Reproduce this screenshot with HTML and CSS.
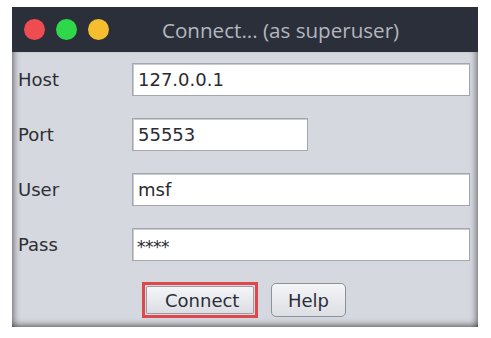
FILE: index.html
```html
<!DOCTYPE html>
<html lang="en">

<head>
    <meta charset="UTF-8">
    <meta name="viewport" content="width=device-width, initial-scale=1.0">
    <title>Connect</title>
    <link rel="stylesheet" href="styles.css">
</head>

<body>

    <div class="window">
        <div class="titlebar">
            <span class="dot dot-red"></span>
            <span class="dot dot-green"></span>
            <span class="dot dot-yellow"></span>
            <span class="title">Connect... (as superuser)</span>
        </div>

        <div class="content">
            <div class="form-row">
                <label>Host</label>
                <div class="field field-wide">127.0.0.1</div>
            </div>
            <div class="form-row">
                <label>Port</label>
                <div class="field field-short">55553</div>
            </div>
            <div class="form-row">
                <label>User</label>
                <div class="field field-wide">msf</div>
            </div>
            <div class="form-row">
                <label>Pass</label>
                <div class="field field-wide field-pass">****</div>
            </div>

            <div class="button-row">
                <div class="highlight">
                    <button class="btn">Connect</button>
                </div>
                <button class="btn btn-help">Help</button>
            </div>
        </div>
    </div>

</body>

</html>
```

FILE: styles.css
```css
body {
    margin: 0;
    padding: 7px 0 0 12px;
    background-color: #fff;
    font-family: "DejaVu Sans", sans-serif;
}

.window {
    width: 466px;
}

.titlebar {
    height: 45px;
    background-color: #2b2f3a;
    display: flex;
    align-items: center;
    padding-left: 12px;
    box-sizing: border-box;
}

.dot {
    width: 21px;
    height: 21px;
    border-radius: 50%;
    margin-right: 11px;
}

.dot-red {
    background-color: #ee4c50;
}

.dot-green {
    background-color: #2fd84a;
}

.dot-yellow {
    background-color: #f6bd2e;
}

.title {
    margin-left: 42px;
    font-family: "Open Sans", sans-serif;
    font-size: 20.6px;
    color: #b3b7bf;
}

.content {
    background-color: #d5d8df;
    padding: 11px 8px 9px 6px;
    box-shadow: inset 7px 0 6px -5px rgba(0, 0, 0, 0.45),
        inset -7px 0 6px -5px rgba(0, 0, 0, 0.45),
        inset 0 -7px 6px -5px rgba(0, 0, 0, 0.5);
}

.form-row {
    display: flex;
    align-items: center;
    margin-bottom: 22px;
}

.form-row label {
    width: 114px;
    font-size: 18px;
    color: #2e2e33;
}

.field {
    height: 33px;
    box-sizing: border-box;
    background-color: #fff;
    border: 1px solid #a3a6ad;
    box-shadow: inset 1px 1px 0 #c9ccd1;
    padding-left: 5px;
    font-size: 18px;
    line-height: 31px;
    color: #2a2a30;
}

.field-wide {
    width: 338px;
}

.field-short {
    width: 176px;
}

.field-pass {
    font-size: 17px;
    letter-spacing: -0.5px;
    padding-left: 4px;
    line-height: 36px;
}

.button-row {
    display: flex;
    justify-content: center;
    align-items: center;
    gap: 13px;
    margin-top: -1px;
}

.highlight {
    border: 3px solid #e0474a;
    padding: 1px;
    display: flex;
}

.btn {
    font-family: "DejaVu Sans", sans-serif;
    font-size: 18px;
    color: #2a2d3a;
    background: linear-gradient(#f4f5f7, #dcdee3);
    border: 1px solid #9a9ca3;
    border-radius: 3px;
    height: 28px;
    padding: 0 18px;
    cursor: pointer;
}

.highlight .btn {
    width: 108px;
    border-radius: 2px;
}

.btn-help {
    height: 34px;
    width: 75px;
    padding: 0;
    border-radius: 5px;
    border-color: #8e9097;
}
```
